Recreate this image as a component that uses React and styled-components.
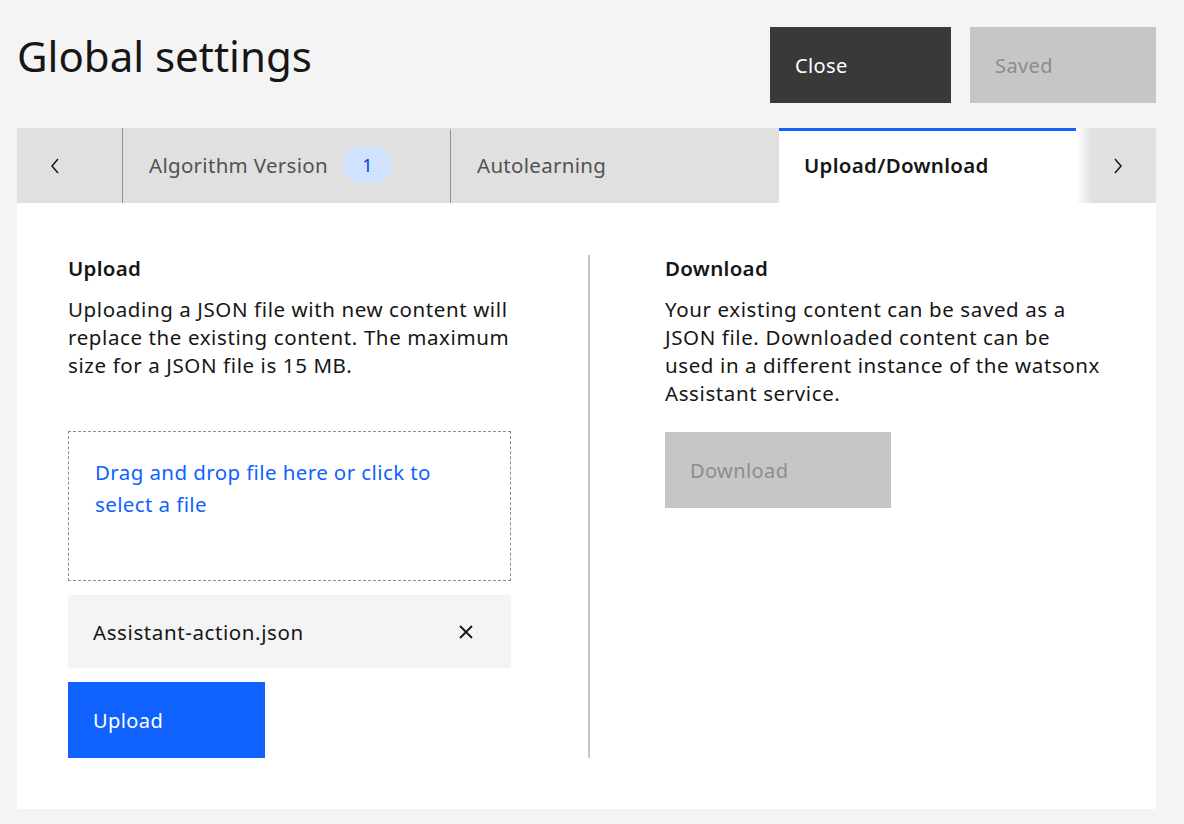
import styled, { createGlobalStyle } from 'styled-components';

const GlobalStyle = createGlobalStyle`
  body {
    margin: 0;
    background: #f4f4f4;
    font-family: "Noto Sans", "Open Sans", sans-serif;
    color: #161616;
  }
`;

const Page = styled.div`
  padding: 27px 28px 16px 17px;
`;

const Header = styled.div`
  display: flex;
  justify-content: space-between;
  align-items: flex-start;
`;

const Title = styled.h1`
  margin: 4px 0 0 0;
  font-size: 42px;
  line-height: 50px;
  font-weight: 400;
  color: #161616;
`;

const Actions = styled.div`
  display: flex;
  gap: 19px;
`;

const Button = styled.button`
  display: flex;
  align-items: center;
  height: 76px;
  width: ${p => p.$w}px;
  padding: 0 25px;
  border: none;
  font-family: inherit;
  font-size: 20px;
  letter-spacing: 0.4px;
  text-align: left;
  cursor: pointer;
  background: ${p => (p.$kind === 'primary' ? '#0f62fe' : p.$kind === 'dark' ? '#393939' : '#c6c6c6')};
  color: ${p => (p.$kind === 'disabled' ? '#8d8d8d' : '#ffffff')};
`;

const TabBar = styled.div`
  display: flex;
  height: 75px;
  margin-top: 25px;
  background: #e0e0e0;
`;

const ArrowButton = styled.div`
  flex: none;
  display: flex;
  align-items: center;
  justify-content: ${p => (p.$start ? 'flex-start' : 'center')};
  width: ${p => p.$w}px;
  padding-left: ${p => p.$pl || 0}px;
  box-sizing: border-box;
  border-right: ${p => (p.$divider ? '1px solid #8d8d8d' : 'none')};
  background: ${p => (p.$fade ? 'linear-gradient(to right, #ffffff 0, #e0e0e0 16px)' : '#e0e0e0')};
  color: #161616;
`;

const TabList = styled.div`
  flex: 1;
  display: flex;
  overflow: hidden;
`;

const Tab = styled.div`
  flex: none;
  display: flex;
  align-items: center;
  gap: 15px;
  width: 328px;
  box-sizing: border-box;
  padding-left: ${p => (p.$active ? 25 : 26)}px;
  font-size: 20.5px;
  letter-spacing: 0.3px;
  color: ${p => (p.$active ? '#161616' : '#525252')};
  font-weight: ${p => (p.$active ? 600 : 400)};
  background: ${p => (p.$active ? '#ffffff' : 'transparent')};
  border-top: 3px solid ${p => (p.$active ? '#0f62fe' : 'transparent')};
  border-right: ${p => (p.$divider ? '1px solid #8d8d8d' : 'none')};
  padding-bottom: 5px;
`;

const Badge = styled.span`
  display: inline-flex;
  align-items: center;
  justify-content: center;
  width: 49px;
  height: 36px;
  border-radius: 18px;
  background: #d0e2ff;
  color: #0043ce;
  font-size: 18px;
  letter-spacing: 0;
`;

const Panel = styled.div`
  display: grid;
  grid-template-columns: 522px 1fr;
  background: #ffffff;
  padding: 52px 51px 51px;
`;

const Column = styled.div`
  padding: ${p => (p.$left ? '0 77px 0 0' : '0 0 0 75px')};
  border-right: ${p => (p.$left ? '2px solid #c6c6c6' : 'none')};
  max-width: ${p => (p.$left ? 'none' : '443px')};
`;

const Heading = styled.h2`
  margin: -1px 0 13px;
  font-size: 20.5px;
  line-height: 28px;
  font-weight: 600;
  letter-spacing: 0.3px;
  color: #161616;
`;

const Text = styled.p`
  margin: 0;
  font-size: 20.5px;
  line-height: 28px;
  letter-spacing: 0.6px;
  color: #161616;
`;

const DropZone = styled.div`
  margin-top: 52px;
  height: 150px;
  box-sizing: border-box;
  border: 1px dashed #8d8d8d;
  padding: 24px 26px;
  font-size: 20.5px;
  line-height: 32px;
  letter-spacing: 0.4px;
  color: #0f62fe;
  cursor: pointer;
`;

const FileRow = styled.div`
  display: flex;
  align-items: center;
  justify-content: space-between;
  height: 73px;
  margin: 14px 0;
  padding: 0 37px 0 25px;
  background: #f4f4f4;
  font-size: 20.5px;
  letter-spacing: 0.6px;
  color: #161616;
`;

const Chevron = ({ dir }) => (
  <svg width="10" height="18" viewBox="0 0 10 18" fill="none">
    <polyline
      points={dir === 'left' ? '8,2 2,9 8,16' : '2,2 8,9 2,16'}
      stroke="#161616"
      strokeWidth="1.5"
    />
  </svg>
);

const CloseIcon = () => (
  <svg width="16" height="16" viewBox="0 0 16 16" fill="none">
    <path d="M2 2 L14 14 M14 2 L2 14" stroke="#161616" strokeWidth="1.8" />
  </svg>
);

export default function App() {
  return (
    <Page>
      <GlobalStyle />
      <Header>
        <Title>Global settings</Title>
        <Actions>
          <Button $kind="dark" $w={181}>Close</Button>
          <Button $kind="disabled" $w={186}>Saved</Button>
        </Actions>
      </Header>

      <TabBar>
        <ArrowButton $w={106} $pl={33} $start $divider>
          <Chevron dir="left" />
        </ArrowButton>
        <TabList>
          <Tab $divider>
            Algorithm Version <Badge>1</Badge>
          </Tab>
          <Tab>Autolearning</Tab>
          <Tab $active>Upload/Download</Tab>
        </TabList>
        <ArrowButton $w={80} $pl={4} $fade>
          <Chevron dir="right" />
        </ArrowButton>
      </TabBar>

      <Panel>
        <Column $left>
          <Heading>Upload</Heading>
          <Text>
            Uploading a JSON file with new content will replace the existing content. The maximum
            size for a JSON file is 15 MB.
          </Text>
          <DropZone>Drag and drop file here or click to select a file</DropZone>
          <FileRow>
            Assistant-action.json
            <CloseIcon />
          </FileRow>
          <Button $kind="primary" $w={197}>Upload</Button>
        </Column>
        <Column>
          <Heading>Download</Heading>
          <Text>
            Your existing content can be saved as a JSON file. Downloaded content can be used in a
            different instance of the watsonx Assistant service.
          </Text>
          <Button $kind="disabled" $w={226} style={{ marginTop: 25 }}>
            Download
          </Button>
        </Column>
      </Panel>
    </Page>
  );
}
